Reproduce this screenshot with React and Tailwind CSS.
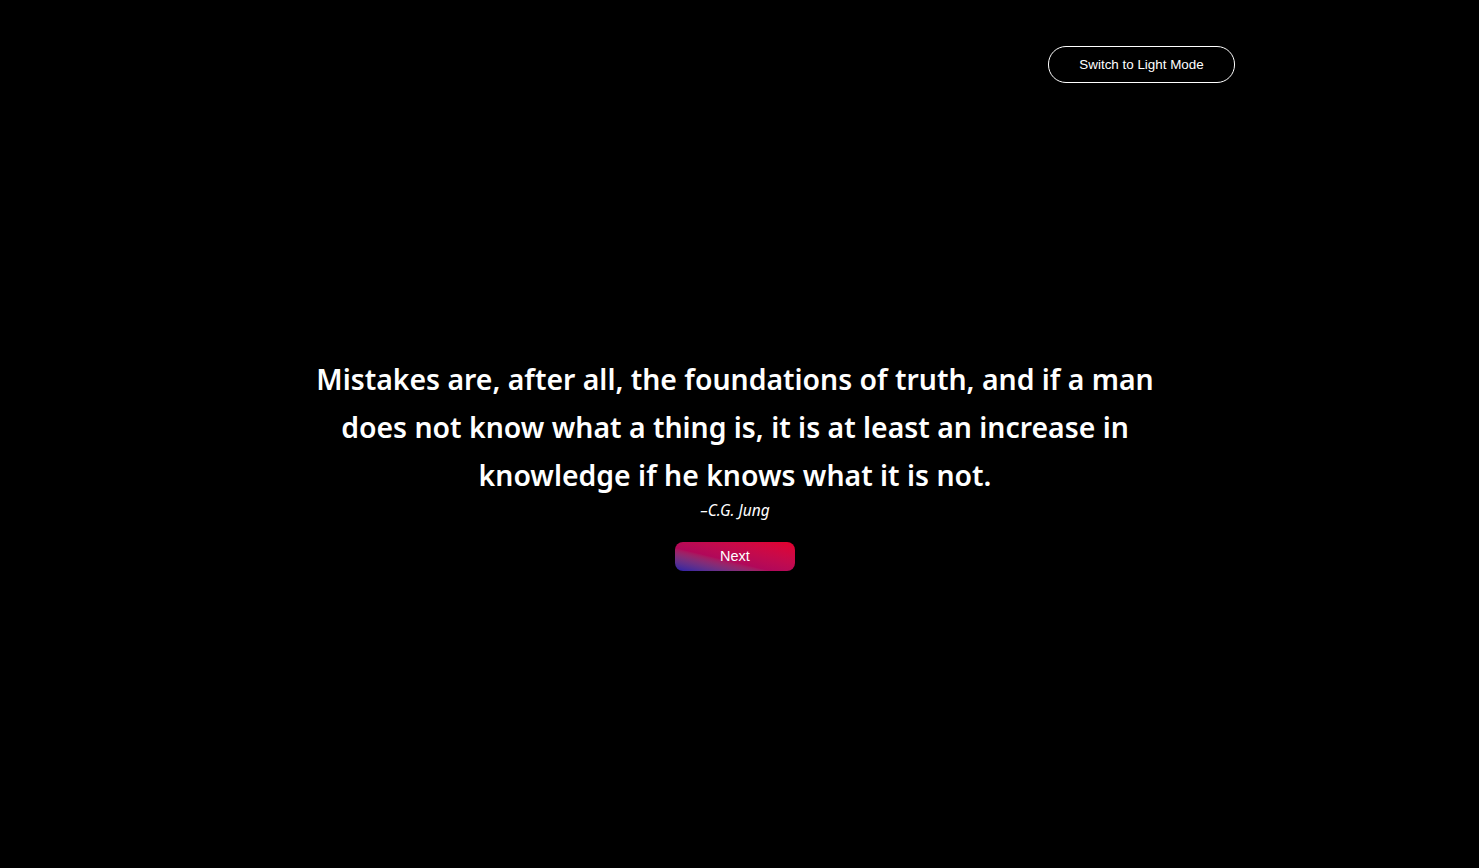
import React from 'react';

function App() {
	return (
		<div className="min-h-screen w-full bg-black text-white flex flex-col">

			<div className="flex justify-end pt-[46px] pr-[244px]">
				<button className="h-[37px] w-[187px] pt-[1px] rounded-[18px] border border-white bg-black text-[13.4px] text-white font-['Liberation_Sans',Arial,sans-serif]">
					Switch to Light Mode
				</button>
			</div>

			<div className="flex flex-col items-center mt-[272px] pr-[9px]">
				<p className="w-[860px] text-center text-[28.4px] leading-[48px] font-semibold font-['Noto_Sans',sans-serif]">
					Mistakes are, after all, the foundations of truth, and if a man does not know what a thing is, it is at least an increase in knowledge if he knows what it is not.
				</p>
				<p className="text-[15.5px] leading-[22px] italic font-['Noto_Sans',sans-serif]">
					–C.G. Jung
				</p>
				<button className="mt-[21px] h-[29px] w-[120px] rounded-lg bg-gradient-to-tr from-[#2a1aa8] via-[#b0085a] via-40% to-[#e4002b] text-[14.5px] text-white font-['Liberation_Sans',Arial,sans-serif]">
					Next
				</button>
			</div>

		</div>
	);
}

export default App;
